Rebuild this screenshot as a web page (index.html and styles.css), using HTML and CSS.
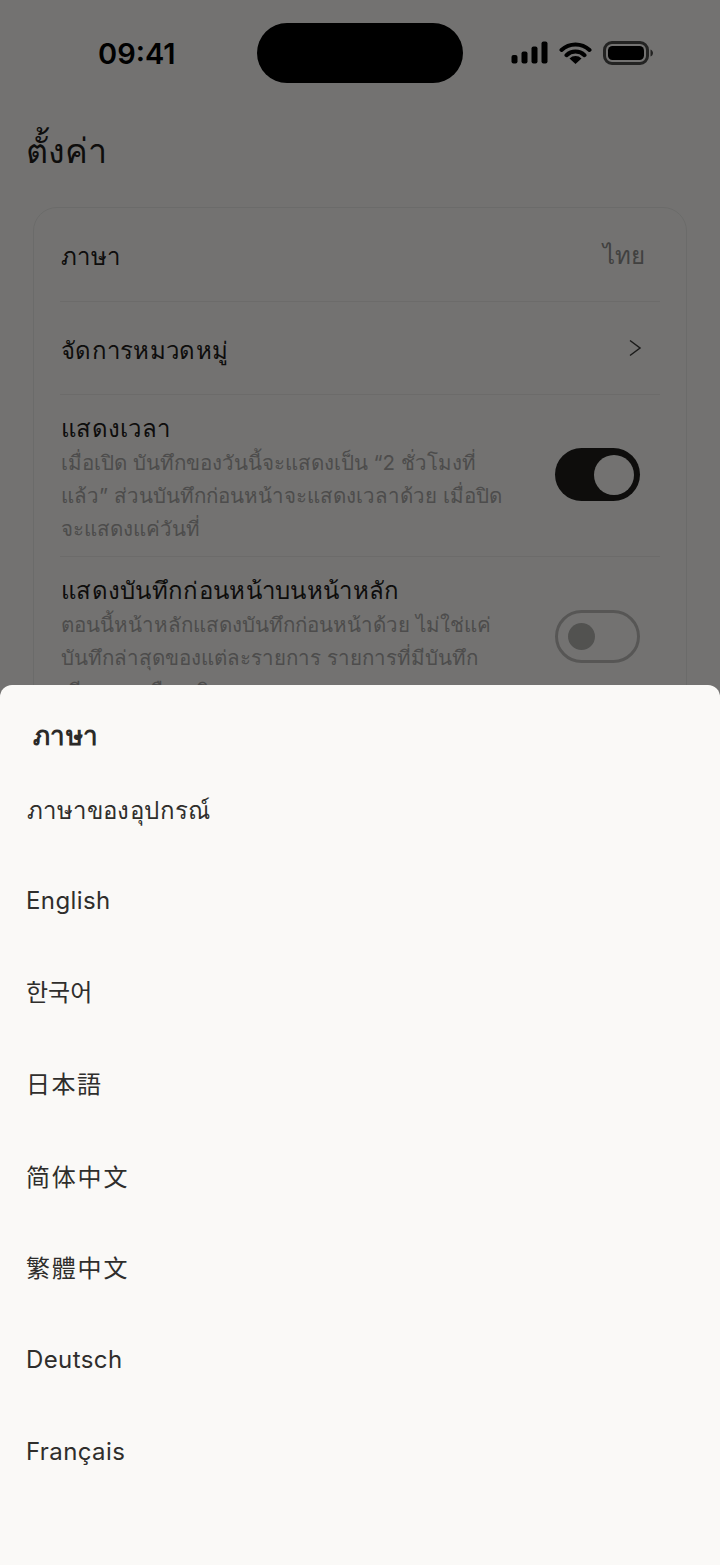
FILE: index.html
```html
<!DOCTYPE html>
<html lang="th">
<head>
<meta charset="utf-8">
<title>ตั้งค่า</title>
<link rel="stylesheet" href="styles.css">
</head>
<body>
<div class="page">
  <header class="status">
    <span class="time">09:41</span>
    <div class="island"></div>
    <div class="status-icons">
      <svg class="signal" width="37" height="24" viewBox="0 0 37 24"><rect x="0.500" y="14" width="6" height="8.500" rx="2"/><rect x="10.500" y="10.500" width="6" height="12" rx="2"/><rect x="20.500" y="5.500" width="6" height="17" rx="2"/><rect x="30.500" y="0.500" width="6" height="22" rx="2"/></svg>
      <svg class="wifi" width="33" height="24" viewBox="0 0 33 24"><path d="M2.500 9a20.500 20.500 0 0 1 28 0M7.500 14.200a13 13 0 0 1 18 0" fill="none" stroke="#000" stroke-width="4" stroke-linecap="round"/><path d="M16.500 23l-6-5.600a8.500 8.500 0 0 1 12 0z"/></svg>
      <svg class="battery" width="51" height="24" viewBox="0 0 51 24"><rect x="1.500" y="1.500" width="43" height="21" rx="7.500" fill="none" stroke="#4d4c4b" stroke-width="3"/><rect x="5" y="5" width="36" height="14" rx="4.500"/><path d="M47.500 8.500c1.500.5 2.500 2 2.500 3.500s-1 3-2.500 3.500z" fill="#4d4c4b"/></svg>
    </div>
  </header>
  <h1 class="title">ตั้งค่า</h1>
  <section class="card">
    <div class="row row-short">
      <span class="label">ภาษา</span>
      <span class="value">ไทย</span>
    </div>
    <div class="row row-short">
      <span class="label">จัดการหมวดหมู่</span>
      <svg class="chevron" width="14" height="20" viewBox="0 0 14 20"><path d="M2 2.500l10 7.500-10 7.500" fill="none" stroke="#3c3b39" stroke-width="1.500"/></svg>
    </div>
    <div class="row row-tall">
      <div class="text">
        <div class="label">แสดงเวลา</div>
        <p class="desc">เมื่อเปิด บันทึกของวันนี้จะแสดงเป็น “2 ชั่วโมงที่แล้ว” ส่วนบันทึกก่อนหน้าจะแสดงเวลาด้วย เมื่อปิดจะแสดงแค่วันที่</p>
      </div>
      <div class="toggle toggle-on"><span class="thumb"></span></div>
    </div>
    <div class="row row-tall">
      <div class="text">
        <div class="label">แสดงบันทึกก่อนหน้าบนหน้าหลัก</div>
        <p class="desc">ตอนนี้หน้าหลักแสดงบันทึกก่อนหน้าด้วย ไม่ใช่แค่บันทึกล่าสุดของแต่ละรายการ รายการที่มีบันทึกเดียวจะเหมือนเดิม</p>
      </div>
      <div class="toggle toggle-off"><span class="thumb"></span></div>
    </div>
  </section>
</div>
<div class="scrim"></div>
<section class="sheet">
  <h2 class="sheet-title">ภาษา</h2>
  <ul class="langs">
    <li class="th">ภาษาของอุปกรณ์</li>
    <li>English</li>
    <li class="ko" lang="ko">한국어</li>
    <li class="ja" lang="ja">日本語</li>
    <li class="zh" lang="zh-CN">简体中文</li>
    <li class="zh" lang="zh-TW">繁體中文</li>
    <li>Deutsch</li>
    <li>Français</li>
  </ul>
</section>
</body>
</html>
```
FILE: styles.css
```css
* { box-sizing: border-box; }
html, body { margin: 0; height: 100%; }
body {
  position: relative;
  width: 720px;
  height: 1565px;
  overflow: hidden;
  background: #faf9f7;
  color: #1f1e1c;
  font-family: Inter, sans-serif;
}
.page { height: 1565px; padding-top: 23px; }
.status {
  position: relative;
  display: flex;
  justify-content: space-between;
  align-items: center;
  height: 60px;
  padding: 0 66px 0 98px;
}
.time { font-size: 29px; font-weight: 600; color: #000; }
.island { position: absolute; left: 257px; top: 0; width: 206px; height: 60px; border-radius: 30px; background: #000; }
.status-icons { display: flex; align-items: center; gap: 11px; }
.status-icons svg { display: block; fill: #000; }
.title { margin: 46px 0 0; padding: 0 26px; height: 78px; font-size: 34px; line-height: 44px; font-weight: 400; }
.card {
  margin: 0 33px;
  padding: 0 26px;
  border: 1px solid #eae9e6;
  border-radius: 24px;
}
.row { display: flex; justify-content: space-between; align-items: center; padding-left: 1px; border-bottom: 1px solid #ebeae7; }
.row-short { height: 93px; padding-top: 5px; }
.row-short:first-child { height: 94px; padding-right: 15px; }
.row-short:nth-child(2) { padding-right: 18px; }
.row-tall { height: 162px; padding-right: 20px; padding-bottom: 2px; }
.text { padding-top: 7px; }
.label { font-size: 24px; line-height: 34px; letter-spacing: 0.300px; }
.value { margin-bottom: 4px; font-size: 24px; color: #8f8e8c; }
.chevron { margin-top: -5px; }
.desc { margin: 0; width: 445px; font-size: 20.500px; line-height: 33px; color: #a8a7a5; }
.toggle { position: relative; width: 85px; height: 53px; border-radius: 27px; }
.toggle-on { background: #1f1e1c; }
.toggle-on .thumb { position: absolute; right: 6px; top: 7px; width: 40px; height: 40px; border-radius: 50%; background: #faf9f7; }
.toggle-off { border: 3px solid #bdbcb9; }
.toggle-off .thumb { position: absolute; left: 10px; top: 10px; width: 27px; height: 27px; border-radius: 50%; background: #b3b2af; }
.scrim { position: absolute; inset: 0; background: rgba(0, 0, 0, 0.54); }
.sheet {
  position: absolute;
  left: 0; right: 0; bottom: 0;
  top: 685px;
  padding-top: 29px;
  background: #faf9f7;
  border-radius: 12px 12px 0 0;
}
.sheet-title { margin: 0 0 5px 33px; font-size: 26px; line-height: 44px; font-weight: 700; letter-spacing: 0.300px; color: #2b2a28; }
.langs { list-style: none; margin: 0; padding: 0 26px; }
.langs li { height: 91.800px; display: flex; align-items: center; font-size: 24px; letter-spacing: 0.400px; color: #2f2e2c; }
.langs .th { padding: 4px 0 0 1px; }
.langs .ko { padding-bottom: 3px; font-family: "Noto Sans CJK KR", sans-serif; letter-spacing: 0; }
.langs .ja { padding-bottom: 3px; font-family: "Noto Sans CJK JP", sans-serif; letter-spacing: 1.500px; }
.langs .zh { padding-bottom: 2px; font-family: "Noto Sans CJK SC", sans-serif; letter-spacing: 1.800px; }
.langs .zh:lang(zh-TW) { font-family: "Noto Sans CJK TC", sans-serif; }
```
